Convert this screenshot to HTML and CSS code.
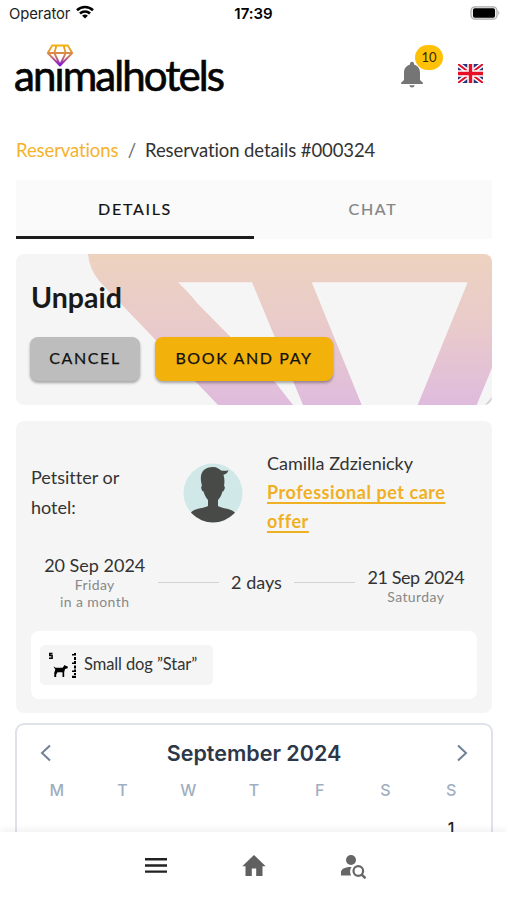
FILE: index.html
```html
<!DOCTYPE html>
<html lang="en">
<head>
<meta charset="utf-8">
<title>Reservation details</title>
<link rel="stylesheet" href="styles.css">
</head>
<body>
<div class="status">
  <div class="operator"><span>Operator</span>
    <svg width="18" height="14" viewBox="0 0 18 14" fill="none" stroke="#000" stroke-width="2.600"><path d="M1 5.200a11.500 11.500 0 0 1 16 0M4 8.500a7.200 7.200 0 0 1 10 0"/><path d="M9 13.600 6.100 10.800a4 4 0 0 1 5.800 0z" fill="#000" stroke="none"/></svg>
  </div>
  <div class="clock">17:39</div>
  <svg class="battery" width="31" height="14" viewBox="0 0 31 14"><rect x="1" y=".8" width="26" height="12.400" rx="3.800" fill="#eee" stroke="#aaa" stroke-width="1.200"/><rect x="3" y="2.300" width="22" height="9.400" rx="1.800"/><path d="M28.300 4.600q2 2.400 0 4.800z" fill="#aaa"/></svg>
</div>
<header class="header">
  <div class="logo"><span>animalhotels</span>
    <svg class="gem" width="28" height="23" viewBox="0 0 28 23"><defs><linearGradient id="gem" gradientUnits="userSpaceOnUse" x1="0" y1="0" x2="0" y2="23"><stop stop-color="#f8b600"/><stop offset=".5" stop-color="#d08058"/><stop offset="1" stop-color="#7a00f0"/></linearGradient></defs><path d="M6.200 1.500h15.600L26.200 9 14 21.500 1.800 9zM2 9h24M10.400 1.800 8.300 9 14 21 19.700 9l-2.100-7.200" fill="none" stroke="url(#gem)" stroke-width="1.800" stroke-linejoin="round"/></svg>
  </div>
  <div class="bell">
    <svg width="24" height="27" viewBox="0 0 24 27" fill="#757575"><path d="M12 26.500c1.500 0 2.600-.9 2.600-2.200H9.400c0 1.300 1.100 2.200 2.600 2.200zM20 19v-7.200c0-4.200-2.300-7.300-6-8.300V2.700a2 2 0 0 0-4 0v.8c-3.700 1-6 4.100-6 8.300V19l-2.900 2.800v1.300h21.800v-1.300z"/></svg>
    <span class="badge">10</span>
  </div>
  <svg class="flag" width="25" height="19" viewBox="0 0 25 19"><path fill="#29337a" d="M0 0h25v19H0z"/><path d="M0 0l25 19M25 0 0 19" stroke="#fff" stroke-width="5"/><path d="M0 0l25 19M25 0 0 19" stroke="#e0102c" stroke-width="2"/><path d="M12.500 0v19M0 9.500h25" stroke="#fff" stroke-width="6.400"/><path d="M12.500 0v19M0 9.500h25" stroke="#e60f25" stroke-width="3.400"/></svg>
</header>
<nav class="crumbs"><a>Reservations</a><i>/</i><span>Reservation details #000324</span></nav>
<div class="tabs"><div class="tab active">DETAILS</div><div class="tab">CHAT</div></div>
<section class="payment">
  <svg class="art" width="476" height="151" viewBox="0 0 476 151"><defs><linearGradient id="art" x1="0" y1="0" x2="0" y2="1"><stop stop-color="#edd2bf"/><stop offset=".5" stop-color="#e9cacb"/><stop offset="1" stop-color="#dfbbdd"/></linearGradient></defs><path fill="url(#art)" fill-rule="evenodd" d="M72 0H476V113.700L460.700 151H401.700L451.700 28.300H295.700L345.700 151H287L236 28.300H162Q174 40 182 50L259 128 277 151H202L84 28Q73 15 72 0z"/><path d="m476 143-7 8h7z" fill="#d5cbd5"/></svg>
  <h1>Unpaid</h1>
  <div class="buttons"><button class="cancel">CANCEL</button><button class="pay">BOOK AND PAY</button></div>
</section>
<section class="details">
  <div class="sitter">
    <div class="label">Petsitter or<br>hotel:</div>
    <svg class="avatar" width="60" height="60" viewBox="0 0 60 60"><defs><clipPath id="c"><circle cx="30" cy="30" r="29.500"/></clipPath></defs><g clip-path="url(#c)"><path fill="#d0e8e7" d="M0 0h60v60H0z"/><path fill="#484a48" d="M19 23C15.500 10 20 4.500 30 4c4 0 6 2 8 3.500 3 .5 5.500.5 7.500-.3-1 3-3 4-5 4.500 1 3.500 1.300 7 .5 11.300 2 .5 0 5.500-1.500 5.500-1 4-3 7-4.500 8.500V43c3 2.500 15 2.500 17.500 7.500L50 62H10L7.500 50.500C10 45 21.500 45.500 25 43v-6c-2-2-3.500-5-4.500-8.500-1.500 0-3.500-5-1.500-5.500z"/></g></svg>
    <div class="offer">Camilla Zdzienicky<br><a>Professional pet care<br>offer</a></div>
  </div>
  <div class="stay">
    <div class="date first"><b>20 Sep 2024</b><small>Friday</small><small>in a month</small></div>
    <hr><div class="days">2 days</div><hr>
    <div class="date last"><b>21 Sep 2024</b><small>Saturday</small></div>
  </div>
  <div class="pets"><div class="pet">
    <svg width="28" height="28" viewBox="0 0 28 28"><path d="M4.500 2.400H1.800v2.200h2.300v2.600H1" fill="none" stroke="#000" stroke-width="1.500"/><path d="M5.500 15.300l2.200 1.500h7L16.500 14l1.200.8 2 .7v1.700l-2.600.8-.9 3V26h-1.700v-4.800H9.500L8.200 23.500V26H6.300v-4.500l1-2.800z"/><path d="M26 2h2v2.500h-4v-1.500h2zM26 6h2v3h-2zM26 10h2v3h-4v-1.500h2zM26 14.500h2v3h-2zM26 18.500h2v2.500h-4v-1.500h2zM26 22h2v2h-2zM24 24.800h4V27h-4z"/></svg>
    <span>Small dog ”Star”</span></div></div>
</section>
<section class="calendar">
  <div class="month"><svg width="12" height="18" viewBox="0 0 12 18"><path d="M10 1.500 2 9l8 7.500"/></svg><h2>September 2024</h2><svg width="12" height="18" viewBox="0 0 12 18"><path d="m2 1.500 8 7.500-8 7.500"/></svg></div>
  <div class="week"><span>M</span><span>T</span><span>W</span><span>T</span><span>F</span><span>S</span><span>S</span></div>
  <div class="week dates"><span class="one">1</span></div>
</section>
<nav class="bottom">
  <svg width="24" height="24" viewBox="0 0 24 24"><path d="M1 5.200h22M1 11.500h22M1 17.600h22" stroke="#222" stroke-width="2.400"/></svg>
  <svg width="24" height="24" viewBox="0 0 24 24" fill="#606060"><path d="M12 1 .3 12.200h3.200V22h6.300v-7.500h4.400V22h6.300v-9.800h3.200z"/></svg>
  <svg width="26" height="26" viewBox="0 0 26 26" fill="#666"><circle cx="11" cy="7" r="5"/><path d="M11.500 14C5 13.700 1 16 1 19.500v3h10c-1.300-3-1.200-6.200.5-8.500z"/><circle cx="18.300" cy="18" r="4.800" fill="none" stroke="#666" stroke-width="2.200"/><path d="m21.500 21.300 4 4" stroke="#666" stroke-width="2.400"/></svg>
</nav>
</body>
</html>
```
FILE: styles.css
```css
* { box-sizing: border-box; }
body { margin: 0; width: 507px; height: 900px; overflow: hidden; background: #fff; font-family: Lato, "Noto Sans", sans-serif; font-variant-ligatures: none; color: #333; font-size: 18px; position: relative; }
svg { display: block; flex: none; }
h1, h2 { margin: 0; }
.status { display: grid; grid-template-columns: 1fr auto 1fr; align-items: center; height: 27px; margin-bottom: 1px; padding: 0 6px 0 9px; font-family: Inter, sans-serif; font-size: 14.800px; color: #222; }
.operator { display: flex; align-items: center; gap: 6px; letter-spacing: -.1px; }
.operator svg { margin-top: -3px; }
.clock { font-weight: 600; color: #000; font-size: 15px; margin-left: -3px; }
.battery { justify-self: end; margin-top: -1px; }
.header { display: flex; align-items: flex-start; height: 100px; padding: 16px 24px 0 14px; }
.logo { position: relative; flex: 1; font-size: 42px; line-height: 63px; letter-spacing: -1.900px; color: #050505; -webkit-text-stroke: .7px #050505; }
.gem { position: absolute; left: 32px; top: 0; background: #fff; }
.bell { position: relative; margin: 17px 34px 0 0; }
.badge { position: absolute; left: 15px; top: -16px; width: 28px; height: 25px; border-radius: 13px; background: #ffc107; color: #332800; font-size: 13px; line-height: 25px; text-align: center; }
.flag { margin-top: 20px; }
.crumbs { display: flex; height: 52px; padding-left: 16px; line-height: 44px; font-size: 18.500px; white-space: nowrap; letter-spacing: -.1px; }
.crumbs a { color: #f5b32c; width: 103px; }
.crumbs i { font-style: normal; color: #666; width: 26px; text-align: center; }
.tabs { display: flex; height: 59px; margin: 0 15px 15px 16px; background: #fafafa; }
.tab { flex: 1; text-align: center; line-height: 57px; font-size: 16px; letter-spacing: 1.700px; color: #858585; -webkit-text-stroke: .2px; }
.active { color: #111; border-bottom: 3px solid #1c1c1c; }
.payment, .details { position: relative; width: 476px; margin-left: 16px; border-radius: 8px; background: #f5f5f5; overflow: hidden; }
.payment { height: 151px; padding: 25px 14px; margin-bottom: 16px; }
.art { position: absolute; left: 0; top: 0; }
h1 { position: relative; font-size: 28.500px; line-height: 36px; color: #191919; padding-left: 1px; }
.buttons { position: relative; display: flex; gap: 15px; margin-top: 22px; }
button { height: 44px; border: 0; border-radius: 8px; font: 16px Lato, sans-serif; letter-spacing: 1.600px; color: #111; padding: 0 0 3px; box-shadow: 0 2px 3px #0005; -webkit-text-stroke: .25px; }
.cancel { width: 110px; background: #bdbdbd; }
.pay { width: 178px; background: #f3b20b; }
.details { height: 292px; padding: 26px 15px 15px; margin-bottom: 10px; }
.sitter { display: flex; align-items: center; height: 91px; line-height: 29.300px; white-space: nowrap; }
.label { width: 152px; }
.avatar { margin-right: 24px; }
.offer a { color: #f0b024; font-weight: bold; letter-spacing: .55px; text-decoration: underline; text-decoration-thickness: 1.500px; text-underline-offset: 3px; }
.stay { display: flex; align-items: center; height: 66px; margin-top: 11px; white-space: nowrap; }
.date { text-align: center; }
.first { width: 128px; }
.last { width: 123px; padding-top: 6px; }
.date b { display: block; font-weight: 400; line-height: 22px; }
.last b { letter-spacing: -.4px; }
.date small { display: block; font-size: 14px; line-height: 17px; color: #888; letter-spacing: .4px; }
hr { width: 61px; height: 1px; margin: 0; border: 0; background: #d3d3d3; }
.days { width: 75px; text-align: center; }
.pets { height: 68px; margin-top: 16px; border-radius: 8px; background: #fff; padding: 14px 9px; }
.pet { display: flex; align-items: center; width: 173px; height: 40px; border-radius: 5px; background: #f5f5f5; padding-left: 8px; gap: 8px; font-size: 16.500px; white-space: nowrap; letter-spacing: -.1px; }
.pet span { margin-top: -2px; }
.calendar { width: 478px; height: 200px; margin-left: 15px; border: 2px solid #dfe3e9; border-radius: 9px; padding: 13px 7px; font-family: Inter, sans-serif; }
.month { display: flex; justify-content: space-between; align-items: center; padding: 0 16px; height: 30px; }
.month path { fill: none; stroke: #718096; stroke-width: 2; }
h2 { font-size: 21.500px; font-weight: 600; color: #2d3748; }
.week { display: grid; grid-template-columns: repeat(7, 1fr); text-align: center; font-size: 16px; font-weight: 500; line-height: 44px; color: #a0aec0; }
.one { grid-column: 7; color: #222; line-height: 32px; }
.bottom { position: absolute; left: 0; right: 0; bottom: 0; height: 68px; background: #fff; display: flex; justify-content: center; align-items: center; gap: 74px; padding-left: 3px; box-shadow: 0 -2px 8px #0001; }
```
